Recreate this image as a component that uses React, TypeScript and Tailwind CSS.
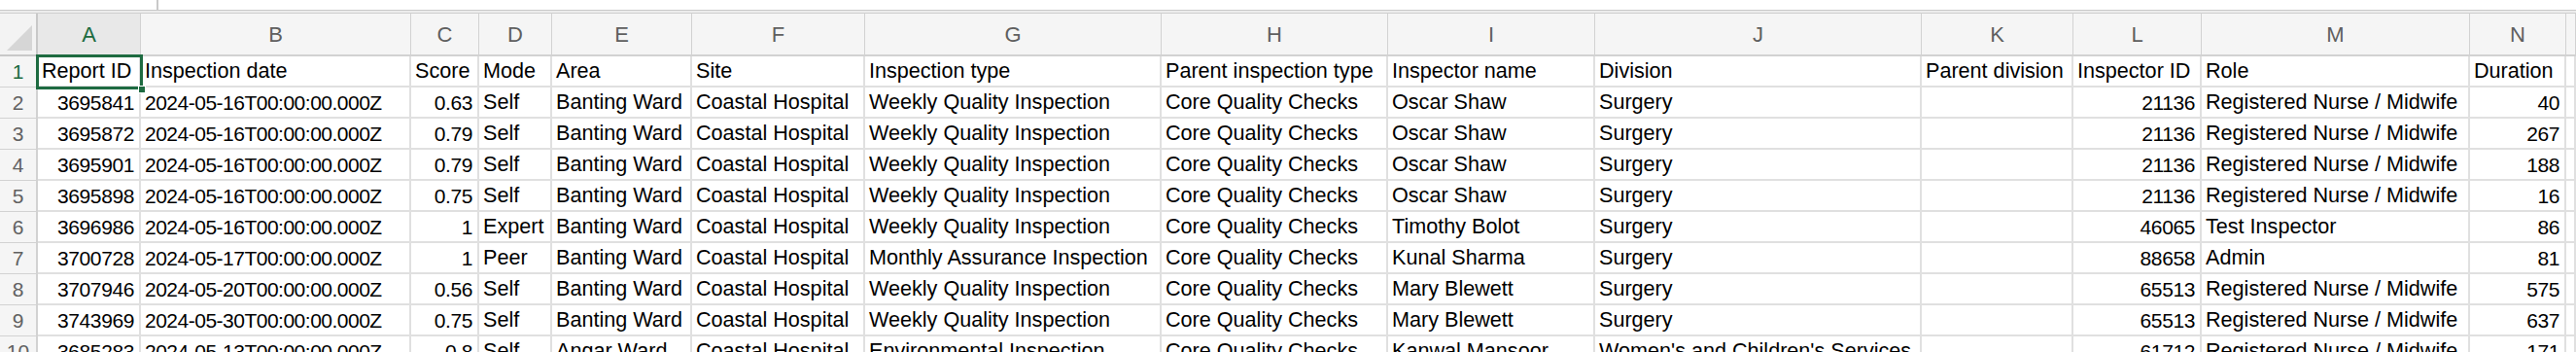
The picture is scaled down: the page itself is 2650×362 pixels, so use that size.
import React from "react";

const COLS = [
  { k: "A", w: 106 },
  { k: "B", w: 278 },
  { k: "C", w: 70 },
  { k: "D", w: 75 },
  { k: "E", w: 144 },
  { k: "F", w: 178 },
  { k: "G", w: 305 },
  { k: "H", w: 233 },
  { k: "I", w: 213 },
  { k: "J", w: 336 },
  { k: "K", w: 156 },
  { k: "L", w: 132 },
  { k: "M", w: 276 },
  { k: "N", w: 99 },
  { k: "", w: 10 },
];

const NUMERIC = new Set([0, 2, 11, 13]);

const HEADER = [
  "Report ID",
  "Inspection date",
  "Score",
  "Mode",
  "Area",
  "Site",
  "Inspection type",
  "Parent inspection type",
  "Inspector name",
  "Division",
  "Parent division",
  "Inspector ID",
  "Role",
  "Duration",
  "",
];

const RN = "Registered Nurse / Midwife";
const mk = (
  id: string,
  date: string,
  score: string,
  mode: string,
  area: string,
  type: string,
  name: string,
  div: string,
  iid: string,
  role: string,
  dur: string
) => [id, date, score, mode, area, "Coastal Hospital", type, "Core Quality Checks", name, div, "", iid, role, dur, ""];

const W = "Weekly Quality Inspection";
const ROWS = [
  mk("3695841", "2024-05-16T00:00:00.000Z", "0.63", "Self", "Banting Ward", W, "Oscar Shaw", "Surgery", "21136", RN, "40"),
  mk("3695872", "2024-05-16T00:00:00.000Z", "0.79", "Self", "Banting Ward", W, "Oscar Shaw", "Surgery", "21136", RN, "267"),
  mk("3695901", "2024-05-16T00:00:00.000Z", "0.79", "Self", "Banting Ward", W, "Oscar Shaw", "Surgery", "21136", RN, "188"),
  mk("3695898", "2024-05-16T00:00:00.000Z", "0.75", "Self", "Banting Ward", W, "Oscar Shaw", "Surgery", "21136", RN, "16"),
  mk("3696986", "2024-05-16T00:00:00.000Z", "1", "Expert", "Banting Ward", W, "Timothy Bolot", "Surgery", "46065", "Test Inspector", "86"),
  mk("3700728", "2024-05-17T00:00:00.000Z", "1", "Peer", "Banting Ward", "Monthly Assurance Inspection", "Kunal Sharma", "Surgery", "88658", "Admin", "81"),
  mk("3707946", "2024-05-20T00:00:00.000Z", "0.56", "Self", "Banting Ward", W, "Mary Blewett", "Surgery", "65513", RN, "575"),
  mk("3743969", "2024-05-30T00:00:00.000Z", "0.75", "Self", "Banting Ward", W, "Mary Blewett", "Surgery", "65513", RN, "637"),
  mk("3685283", "2024-05-13T00:00:00.000Z", "0.8", "Self", "Angar Ward", "Environmental Inspection", "Kanwal Mansoor", "Women's and Children's Services", "61712", RN, "171"),
];

const gridTemplate = "39px 106px 278px 70px 75px 144px 178px 305px 233px 213px 336px 156px 132px 276px 99px 1fr";

export default function App() {
  return (
    <div
      className="w-[2650px] h-[362px] overflow-hidden bg-white text-black"
      style={{ fontFamily: '"Liberation Sans", Arial, sans-serif' }}
    >
      {/* formula bar remnant */}
      <div className="h-[11px] flex border-b border-[#c9c9c9] bg-white">
        <div className="w-[163px] border-r-2 border-[#c9c9c9]" />
        <div className="flex-1" />
      </div>
      <div className="h-[3px] bg-[#ececec] border-b border-[#cfcfcf]" />

      <div className="relative">
        <div className="grid" style={{ gridTemplateColumns: gridTemplate }}>
          {/* header row */}
          <div className="h-[44px] bg-[#f3f3f3] border-r-2 border-b-2 border-[#c8c8c8] relative overflow-hidden">
            <svg className="absolute right-[4px] bottom-[4px]" width="26" height="26" viewBox="0 0 26 26">
              <polygon points="26,0 26,26 0,26" fill="#d6d6d6" />
            </svg>
          </div>
          {COLS.map((c, i) => (
            <div
              key={i}
              className={
                "h-[44px] flex items-center justify-center text-[22px] border-b-2 border-r border-[#d2d2d2] " +
                (i === 0 ? "bg-[#e8e8e8] text-[#1d6b3f]" : "bg-[#f5f5f5] text-[#5f5f5f]")
              }
            >
              {c.k}
            </div>
          ))}

          {/* data rows */}
          {[HEADER, ...ROWS].map((row, r) => (
            <React.Fragment key={r}>
              <div
                className={
                  "h-[32px] flex items-center justify-center text-[21px] bg-[#f5f5f5] border-r-2 border-b border-[#d2d2d2] " +
                  (r === 0 ? "text-[#1d6b3f]" : "text-[#616161]")
                }
              >
                {r + 1}
              </div>
              {row.map((v, c) => {
                const num = r > 0 && NUMERIC.has(c);
                const isDate = r > 0 && c === 1;
                return (
                  <div
                    key={c}
                    className={
                      "h-[32px] flex items-center whitespace-nowrap overflow-hidden leading-none border-r-2 border-b-2 border-[#e0e0e0] " +
                      (num
                        ? "justify-end pr-[5px] pl-[3px] text-[21px] tracking-[-0.4px]"
                        : isDate
                        ? "pl-[4px] pr-[2px] text-[21px] tracking-[-0.5px]"
                        : "pl-[4px] pr-[2px] text-[21.6px]")
                    }
                  >
                    {v}
                  </div>
                );
              })}
            </React.Fragment>
          ))}
        </div>

        {/* selection box on A1 */}
        <div className="absolute left-[37px] top-[42px] w-[110px] h-[36px] border-[3px] border-[#1e6b41] pointer-events-none" />
        <div className="absolute left-[142px] top-[74px] w-[8px] h-[8px] bg-[#1e6b41] border border-white pointer-events-none" />
      </div>
    </div>
  );
}
